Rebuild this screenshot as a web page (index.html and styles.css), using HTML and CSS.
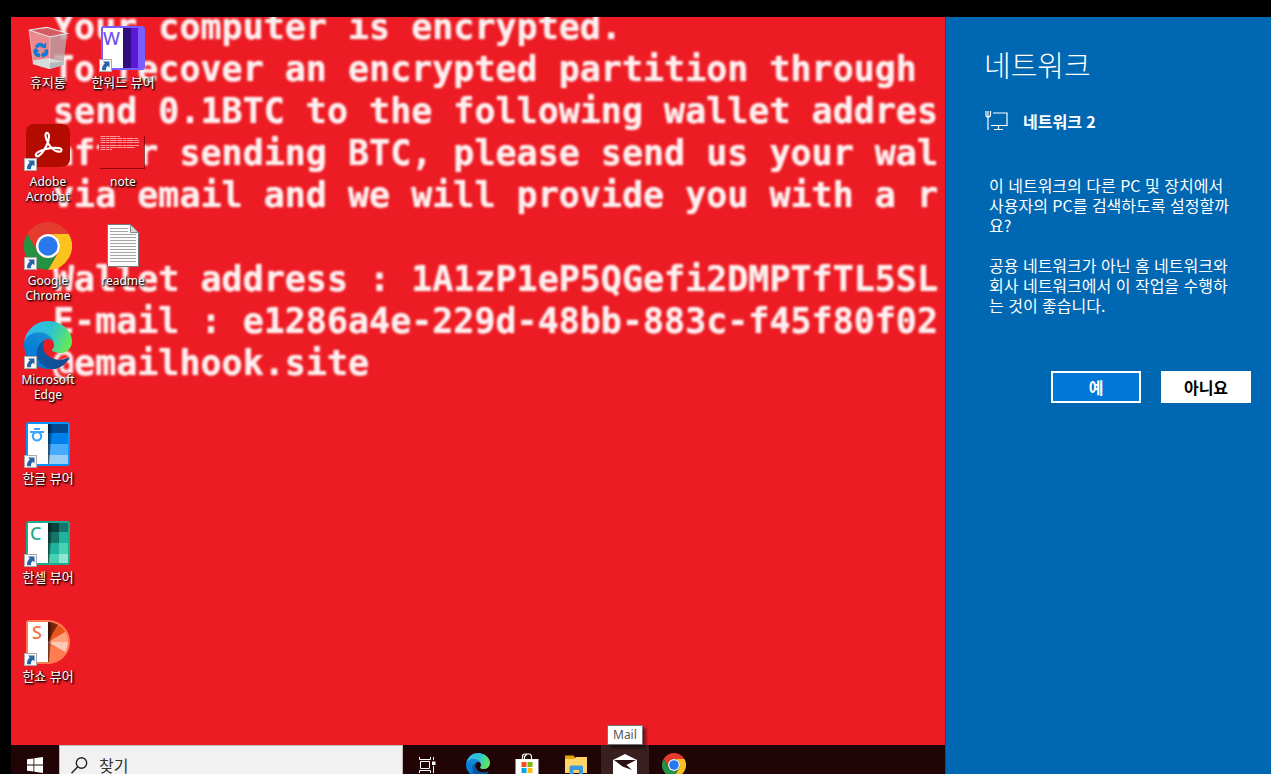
FILE: index.html
```html
<!DOCTYPE html>
<html lang="ko">
<head>
    <meta charset="UTF-8">
    <meta name="viewport" content="width=device-width, initial-scale=1.0">
    <title>Desktop</title>
    <link rel="stylesheet" href="styles.css">
</head>
<body>
    <!-- shared icons -->
    <svg class="defs" width="0" height="0" aria-hidden="true">
        <defs>
            <linearGradient id="edgeDark" x1="0" x2="1"><stop offset="0" stop-color="#0c59a4"/><stop offset="1" stop-color="#114a8b"/></linearGradient>
            <linearGradient id="edgeBlue" x1="0.6" y1="0" x2="0.3" y2="1"><stop offset="0" stop-color="#1b8fd6"/><stop offset="0.5" stop-color="#0680d7"/><stop offset="1" stop-color="#0078d4"/></linearGradient>
            <linearGradient id="edgeGreen" x1="0" y1="0.3" x2="1" y2="0.6"><stop offset="0" stop-color="#35b8f1"/><stop offset="0.5" stop-color="#2bc3d2"/><stop offset="1" stop-color="#67eb53"/></linearGradient>
            <linearGradient id="fold" x1="0" x2="1"><stop offset="0" stop-color="#000" stop-opacity="0.6"/><stop offset="1" stop-color="#000" stop-opacity="0"/></linearGradient>
        </defs>
        <symbol id="shortcut" viewBox="0 0 13 13">
            <rect x="0.5" y="0.5" width="12" height="12" fill="#f8f8f8" stroke="#b0a8a8"/>
            <path d="M4 2.500H10.500V8.500L8.800 6.800C7.300 8 6.800 9.300 7 11.300H3.200C2.500 8.800 3.700 6.300 5.800 4.500Z" fill="#2b62a5"/>
        </symbol>
        <symbol id="chrome" viewBox="0 0 48 48">
            <path d="M3.2 12L13.6 30A12 12 0 0 1 24 12H44.8A24 24 0 0 0 3.2 12Z" fill="#e33b2e"/>
            <path d="M44.8 12H24A12 12 0 0 1 34.4 30L24 48A24 24 0 0 0 44.8 12Z" fill="#fcc31e"/>
            <path d="M3.2 12L13.6 30A12 12 0 0 0 34.4 30L24 48A24 24 0 0 1 3.2 12Z" fill="#229342"/>
            <circle cx="24" cy="24" r="12" fill="#fff"/>
            <circle cx="24" cy="24" r="9.7" fill="#2a78ee"/>
        </symbol>
        <symbol id="edge" viewBox="0 0 256 256">
            <path fill="url(#edgeDark)" d="M235.7 195.5a93.7 93.7 0 0 1-10.5 4.7 101.9 101.9 0 0 1-35.9 6.4c-47.3 0-88.5-32.5-88.5-74.3a31.5 31.5 0 0 1 16.4-27.3c-42.8 1.8-53.8 46.4-53.8 72.5 0 74 68.1 81.4 82.8 81.4 7.9 0 19.8-2.3 27-4.6l1.3-.4a128.3 128.3 0 0 0 66.6-52.8 4 4 0 0 0-5.4-5.6Z"/>
            <path fill="url(#edgeBlue)" d="M105.7 241.4a79.2 79.2 0 0 1-22.7-21.3 80.7 80.7 0 0 1 29.5-120c3.2-1.5 8.5-4.1 15.6-4a32.4 32.4 0 0 1 25.7 13 31.9 31.9 0 0 1 6.3 18.7c0-.2 24.5-79.6-80-79.6-43.9 0-80 41.6-80 78.2a130.2 130.2 0 0 0 12.1 56 128 128 0 0 0 156.4 67 75.5 75.5 0 0 1-62.8-8Z"/>
            <path fill="url(#edgeGreen)" d="M152.3 148.9c-.9 1-3.4 2.5-3.4 5.6 0 2.6 1.7 5.2 4.8 7.3 14.3 10 41.4 8.6 41.5 8.6a59.6 59.6 0 0 0 30.3-8.3 61.4 61.4 0 0 0 30.4-52.9c.3-22.4-8-37.3-11.3-43.9C223.5 23.9 177.7 0 128 0A128 128 0 0 0 0 126.2c.5-36.5 36.8-66 80-66 3.5 0 23.5.3 42 10.1 16.3 8.6 24.9 19 30.8 29.3 6.2 10.7 7.3 24.1 7.3 29.5s-2.7 13.3-7.8 19.9Z"/>
        </symbol>
    </svg>

    <div class="screen">
        <main class="desktop">
            <div class="wallpaper">
<pre class="note">Your computer is encrypted.
To recover an encrypted partition through
send 0.1BTC to the following wallet addres
after sending BTC, please send us your wal
via email and we will provide you with a r

Wallet address : 1A1zP1eP5QGefi2DMPTfTL5SL
E-mail : e1286a4e-229d-48bb-883c-f45f80f02
@emailhook.site</pre>
            </div>

            <div class="icons">
                <a class="icon ko" href="#">
                    <svg viewBox="0 0 48 48">
                        <path d="M5 6L23 3.3L43 9.3L39.3 41L25.3 45L9.3 40.3Z" fill="#e8b8bc" fill-opacity="0.7"/>
                        <path d="M26 13L43 9.3L39.3 41L25.3 45Z" fill="#8e9296" fill-opacity="0.4"/>
                        <path d="M5 6L23 3.3L43 9.3L26 13Z" fill="#d65c64" stroke="#e4e2e2" stroke-width="1.2"/>
                        <path d="M9 36.5L24 34L39.8 37.5L39.3 41L25.3 45L9.3 40.3Z" fill="#d5dadb"/>
                        <path d="M25.3 39L39.8 37.5L39.3 41L25.3 45Z" fill="#b4babc"/>
                        <path d="M26 13L25.3 45M5 6L9.3 40.3" stroke="#eee" stroke-opacity="0.5" fill="none"/>
                        <g fill="none" stroke="#0a7bd4" stroke-width="3.6">
                            <path d="M12.5 23.5Q14.5 19 19 21.5"/>
                            <path d="M16 31.5Q10.5 31 11.5 26.5"/>
                            <path d="M22 25.5Q24 31 19 31"/>
                        </g>
                        <g fill="#0a7bd4">
                            <path d="M22.3 18.5L22 24.3L16.8 23.3Z"/>
                            <path d="M8.8 27.5L11.5 23.5L15.500 27.800Z"/>
                            <path d="M20 27.500V34.300L16.500 31Z"/>
                        </g>
                    </svg>
                    <span>휴지통</span>
                </a>
                <a class="icon" href="#">
                    <svg viewBox="0 0 48 48">
                        <rect x="2" y="1" width="44" height="43" rx="8" fill="#b30b00"/>
                        <path d="M12.2 33C10 30.5 16 27.5 22 26C28 24.5 36.5 24.300 37.500 26.500C38 30 32 29 28 25.500C24 21.500 19.500 11.500 22.500 9.800C26.500 9.300 25 17.500 22.500 22.500C20 28 15 35 12.200 33Z" fill="none" stroke="#fff" stroke-width="2.1"/>
                        <use href="#shortcut" x="0" y="35" width="13" height="13"/>
                    </svg>
                    <span>Adobe<br>Acrobat</span>
                </a>
                <a class="icon" href="#">
                    <svg viewBox="0 0 48 48">
                        <use href="#chrome" width="48" height="48"/>
                        <use href="#shortcut" x="0" y="35" width="13" height="13"/>
                    </svg>
                    <span>Google<br>Chrome</span>
                </a>
                <a class="icon" href="#">
                    <svg viewBox="0 0 48 48">
                        <use href="#edge" width="48" height="48"/>
                        <use href="#shortcut" x="0" y="35" width="13" height="13"/>
                    </svg>
                    <span>Microsoft<br>Edge</span>
                </a>
                <a class="icon ko" href="#">
                    <svg viewBox="0 0 48 48">
                        <rect x="2" y="2" width="44" height="44" rx="3" fill="#0a93ff"/>
                        <path d="M4 4H24V44H4Z" fill="#fff"/>
                        <path d="M24 4H44V13H24Z" fill="#004a94"/>
                        <path d="M24 13H44V24H24Z" fill="#0080e8"/>
                        <path d="M24 24H44V35H24Z" fill="#47abff"/>
                        <path d="M24 35H44V44H24Z" fill="#99cff5"/>
                        <path d="M24 4H29L25 44H24Z" fill="url(#fold)"/>
                        <path d="M10 9H16M6 12H20" stroke="#3aa5ff" stroke-width="2"/>
                        <circle cx="13" cy="16.3" r="4.2" fill="none" stroke="#3aa5ff" stroke-width="2.2"/>
                        <use href="#shortcut" x="0" y="35" width="13" height="13"/>
                    </svg>
                    <span>한글 뷰어</span>
                </a>
                <a class="icon ko" href="#">
                    <svg viewBox="0 0 48 48">
                        <rect x="2" y="2" width="44" height="44" rx="3" fill="#1bab91"/>
                        <path d="M4 4H24V44H4Z" fill="#fff"/>
                        <path d="M24 4H35V13H24Z" fill="#08443f"/>
                        <path d="M35 4H44V13H35ZM24 13H35V24H24Z" fill="#14766a"/>
                        <path d="M35 13H44V24H35ZM24 24H35V35H24Z" fill="#1eb39a"/>
                        <path d="M35 24H44V35H35ZM24 35H35V44H24Z" fill="#48d0b1"/>
                        <path d="M35 35H44V44H35Z" fill="#8fe5cf"/>
                        <path d="M24 4H29L25 44H24Z" fill="url(#fold)"/>
                        <text class="letter" x="6" y="21" fill="#1bab91">C</text>
                        <use href="#shortcut" x="0" y="35" width="13" height="13"/>
                    </svg>
                    <span>한셀 뷰어</span>
                </a>
                <a class="icon ko" href="#">
                    <svg viewBox="0 0 48 48">
                        <path d="M5 2H24A22 22 0 0 1 24 46H5Q2 46 2 43V5Q2 2 5 2Z" fill="#ff7c50"/>
                        <path d="M4 4H24V44H4Z" fill="#fff"/>
                        <path d="M24 24V4A20 20 0 0 1 34 6.7Z" fill="#7c260e"/>
                        <path d="M24 24L34 6.7A20 20 0 0 1 41.3 14Z" fill="#ea541d"/>
                        <path d="M24 24L41.3 14A20 20 0 0 1 44 24Z" fill="#ff9f7c"/>
                        <path d="M24 24H44A20 20 0 0 1 41.3 34Z" fill="#fcc9b4"/>
                        <path d="M24 4H29L25 44H24Z" fill="url(#fold)"/>
                        <text class="letter" x="8" y="21" fill="#f8703f">S</text>
                        <use href="#shortcut" x="0" y="35" width="13" height="13"/>
                    </svg>
                    <span>한쇼 뷰어</span>
                </a>
                <a class="icon ko" href="#">
                    <svg viewBox="0 0 48 48">
                        <rect x="2" y="2" width="44" height="44" rx="3" fill="#7b5cff"/>
                        <path d="M4 4H24V44H4Z" fill="#fff"/>
                        <path d="M24 4H32V44H24Z" fill="#320b80"/>
                        <path d="M32 4H39V44H32Z" fill="#5a17d8"/>
                        <text class="letter" x="4" y="21" fill="#7252ee">W</text>
                        <use href="#shortcut" x="0" y="35" width="13" height="13"/>
                    </svg>
                    <span>한워드 뷰어</span>
                </a>
                <a class="icon" href="#">
                    <svg viewBox="0 0 48 48">
                        <path d="M1 13H46V46H1Z" fill="#600" fill-opacity="0.7"/>
                        <path d="M0 12H45V45H0Z" fill="#ed1c24"/>
                        <g stroke="#ff9da0" stroke-width="1" stroke-dasharray="5 0.7 3 0.5 7 0.7">
                            <path d="M1.5 13.5H21M1.5 15.5H39M1.5 17.5H40M1.5 19.5H41M1.5 22.5H40M1.5 24.5H36M1.5 26.5H13"/>
                        </g>
                    </svg>
                    <span>note</span>
                </a>
                <a class="icon" href="#">
                    <svg viewBox="0 0 48 48">
                        <path d="M8.5 2.5H31.5L39.5 10.5V44.5H8.5Z" fill="#fbfbfb" stroke="#777"/>
                        <path d="M31.5 2.5V10.5H39.5Z" fill="#d8d8d8" stroke="#888"/>
                        <path d="M11 6.5H29M11 9.5H29M11 12.5H37M11 15.5H37M11 18.5H37M11 21.5H37M11 24.5H37M11 27.5H37M11 30.5H37M11 33.5H37M11 36.5H37M11 39.5H37" stroke="#a5a5a5"/>
                    </svg>
                    <span>readme</span>
                </a>
            </div>

            <footer class="taskbar">
                <button class="task start" aria-label="시작">
                    <svg width="16" height="16" viewBox="0 0 16 16" fill="#fff"><path d="M0 2.3L6.5 1.4V7.5H0ZM7.3 1.3L16 0V7.5H7.3ZM0 8.4H6.5V14.6L0 13.7ZM7.3 8.4H16V16L7.3 14.7Z"/></svg>
                </button>
                <label class="search">
                    <svg width="17" height="17" viewBox="0 0 17 17" fill="none" stroke="#222" stroke-width="1.4"><circle cx="10.5" cy="6" r="5.2"/><path d="M6.8 9.8L0.5 16.3"/></svg>
                    <input type="text" placeholder="찾기" aria-label="찾기">
                </label>
                <button class="task view" aria-label="작업 보기">
                    <svg width="17" height="16" viewBox="0 0 17 16" fill="none" stroke="#fff"><path d="M0.5 0V2.5H11.5V0M0.5 16V13.5H11.5V16M1.500 4.500H10.500V11.500H1.500ZM14.500 0V3M14.500 9V16"/><path d="M13 4.500H16.500V8H13Z" fill="#fff" stroke="none"/></svg>
                </button>
                <button class="task" aria-label="Microsoft Edge"><svg width="24" height="24"><use href="#edge"/></svg></button>
                <button class="task" aria-label="Store">
                    <svg width="24" height="24" viewBox="0 0 24 24"><path d="M7.5 6V4Q7.5 1 10 1H14Q16.5 1 16.5 4V6M9.5 6V3.5L12 1" fill="none" stroke="#fff" stroke-width="1.2"/><path d="M0.5 6H23.5V24H0.5Z" fill="#fff"/><path d="M6.5 9H11.5V14H6.5Z" fill="#f25022"/><path d="M12.5 9H17.5V14H12.5Z" fill="#7fba00"/><path d="M6.5 15H11.5V20H6.5Z" fill="#00a4ef"/><path d="M12.5 15H17.5V20H12.5Z" fill="#ffb900"/></svg>
                </button>
                <button class="task" aria-label="파일 탐색기">
                    <svg width="22" height="20" viewBox="0 0 22 20"><path d="M0 0.5H8.500L10 2.500V6H0Z" fill="#e5a50a"/><path d="M0 4H9L11 2H22V18H0Z" fill="#ffd567"/><path d="M4.500 20V11.500L6 10.500H16.500L18 11.500V20H14V15H8.500V20Z" fill="#3a9ae0"/></svg>
                </button>
                <button class="task active" aria-label="Mail">
                    <svg width="24" height="22" viewBox="0 0 24 22"><path d="M0 6L12 0L24 6V22H0Z" fill="#fff"/><path d="M1 6H23L13.500 11L19 16L9.500 12.500Z" fill="#2b1011"/></svg>
                    <span class="tip" role="tooltip">Mail</span>
                </button>
                <button class="task" aria-label="Google Chrome"><svg width="24" height="24"><use href="#chrome"/></svg></button>
            </footer>
        </main>

        <aside class="panel">
            <h1>네트워크</h1>
            <h2>
                <svg width="23" height="20" viewBox="0 0 23 20" fill="none" stroke="#fff" stroke-width="1.2"><path d="M1 0V4Q1 6 3 6Q5.5 6 5.5 4V0M3 0V19M8 2H22V14.5H6M13.5 14.5V18M9 18.5H18"/></svg>
                네트워크 2
            </h2>
            <p>이 네트워크의 다른 PC 및 장치에서<br>사용자의 PC를 검색하도록 설정할까<br>요?</p>
            <p>공용 네트워크가 아닌 홈 네트워크와<br>회사 네트워크에서 이 작업을 수행하<br>는 것이 좋습니다.</p>
            <div class="buttons">
                <button class="yes">예</button>
                <button class="no">아니요</button>
            </div>
        </aside>
    </div>
</body>
</html>
```
FILE: styles.css
```css
* {
    box-sizing: border-box;
}
body {
    margin: 0;
    background: #000;
    font-family: "Noto Sans", "Noto Sans CJK KR", sans-serif;
}
button {
    font-family: inherit;
    border: none;
    padding: 0;
}
.defs {
    position: absolute;
}
.screen {
    display: flex;
    height: 100vh;
    padding: 17px 0 0 11px;
    overflow: hidden;
}

/* desktop */
.desktop {
    flex: 1;
    min-width: 0;
    position: relative;
    display: flex;
    flex-direction: column;
    background: #ed1c24;
}
.wallpaper {
    position: absolute;
    inset: 0;
    overflow: hidden;
}
.note {
    margin: -11px 0 0 42px;
    font: bold 35px/42px "DejaVu Sans Mono", monospace;
    color: #fff0f0;
    text-shadow: 0 0 1px #fff0f0;
    filter: blur(1px);
}
.icons {
    position: relative;
    flex: 1;
    min-height: 0;
    display: grid;
    grid-auto-flow: column;
    grid-template-rows: repeat(7, 99px);
    grid-auto-columns: 75px;
    justify-content: start;
    padding-top: 7px;
}
.icon {
    width: 74px;
    display: flex;
    flex-direction: column;
    align-items: center;
    gap: 3px;
    color: #fff;
    font-size: 12px;
    line-height: 15px;
    text-align: center;
    text-decoration: none;
    text-shadow: 1px 1px 2px #000, 1px 1px 2px #000;
}
.icon svg {
    width: 48px;
    height: 48px;
}
.icon.ko {
    font-size: 13px;
    white-space: nowrap;
}
.letter {
    font: 500 18px "Noto Sans", sans-serif;
    text-shadow: none;
}

/* taskbar */
.taskbar {
    position: relative;
    display: flex;
    gap: 1px;
    height: 40px;
    margin-bottom: -11px;
    background: #210405;
}
.task {
    position: relative;
    width: 48px;
    display: flex;
    align-items: center;
    justify-content: center;
    background: none;
}
.task.start {
    margin-right: -1px;
}
.task.view {
    margin: 0 2px 0 -1px;
}
.task.active {
    background: #3a1f20;
}
.search {
    width: 344px;
    display: flex;
    align-items: center;
    gap: 11px;
    padding-left: 11px;
    background: #f1f1f1;
    border: 1px solid #c4bcbc;
}
.search input {
    flex: 1;
    min-width: 0;
    padding: 0;
    border: none;
    outline: none;
    background: none;
    font: 16px "Noto Sans CJK KR", sans-serif;
}
.search input::placeholder {
    color: #333;
}
.tip {
    position: absolute;
    bottom: 40px;
    left: 6px;
    padding: 0 5px;
    background: #fff;
    border: 1px solid #767676;
    box-shadow: 3px 3px 3px rgba(0, 0, 0, 0.5);
    color: #575757;
    font-size: 12px;
    line-height: 18px;
}

/* network panel */
.panel {
    width: 326px;
    padding: 24px 20px 0 38px;
    background: #0067b3;
    border-left: 1px solid #004f8c;
    color: #fff;
    font-family: "Noto Sans CJK KR", sans-serif;
}
.panel h1 {
    margin: 0 0 24px;
    font-size: 29px;
    font-weight: 300;
    line-height: 46px;
}
.panel h2 {
    display: flex;
    align-items: center;
    gap: 15px;
    margin: 0 0 44px 1px;
    font-size: 16px;
    line-height: 20px;
}
.panel p {
    margin: 0 -10px 20px 5px;
    font-size: 16px;
    line-height: 20px;
    white-space: nowrap;
}
.buttons {
    display: flex;
    justify-content: flex-end;
    gap: 20px;
    margin-top: 56px;
}
.buttons button {
    width: 90px;
    height: 32px;
    border: 2px solid #fff;
    font-size: 16px;
    font-weight: 700;
    line-height: 20px;
}
.yes {
    background: #0078d7;
    color: #fff;
}
.no {
    background: #fff;
    color: #000;
}
```
